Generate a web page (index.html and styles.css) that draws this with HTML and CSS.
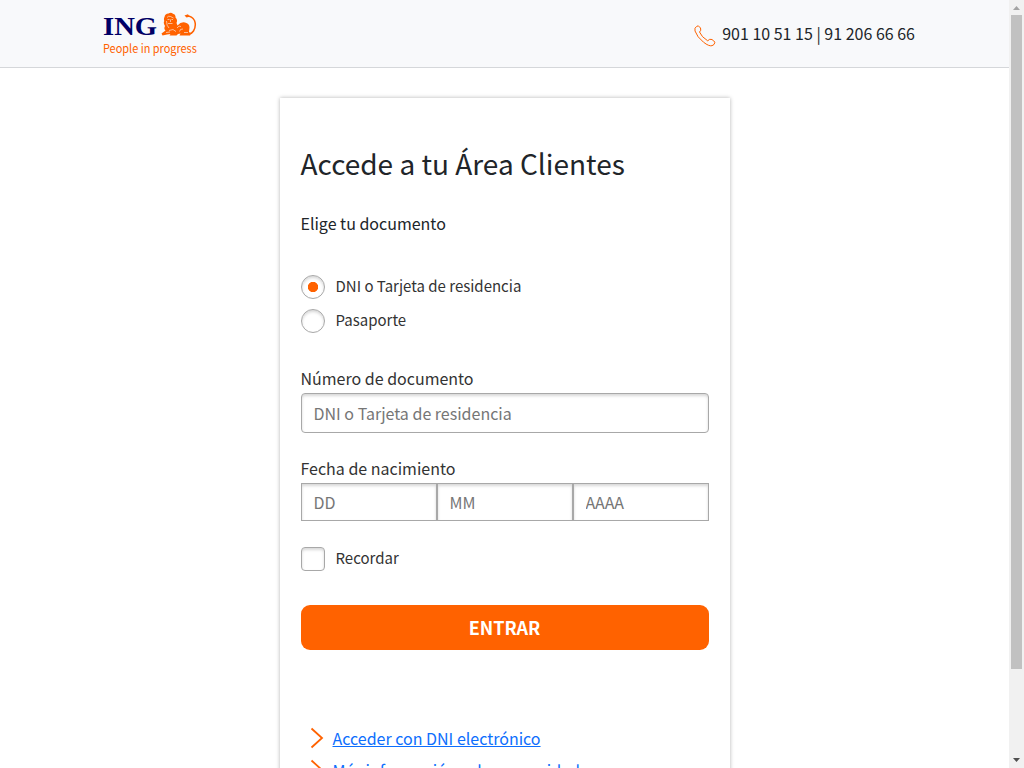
FILE: index.html
```html
<!DOCTYPE html>
<html lang="es">
<head>
<meta charset="utf-8">
<title>ING - Área Clientes</title>
<link rel="stylesheet" href="styles.css">
</head>
<body>
<div class="page">
  <header class="header">
    <div class="logo">
      <div class="logo-top">
        <span class="logo-name">ING</span>
        <svg class="lion" viewBox="0 0 36 24" width="36" height="24">
          <path fill="#ff6200" d="M3.500 5Q4 1.500 7.500 1.500 10-.2 12 1.800 15 2.500 14.500 5.500 17 8 15.500 11L16.500 13.500Q20 9.500 24 10.500 28.500 11.500 28.500 15.500L28 20 30 21.500 29 23.500H18.500L19.500 21.500 17 22 15.500 23.500H8.500L9.500 22 6 22.500 1.500 23.500 .5 21.500 4.500 18.500Q2.500 17 4 14 2 11 3.300 9 2.500 7 3.500 5Z"/>
          <path fill="none" stroke="#ff6200" stroke-width="1.500" d="M26 4Q31 4 33.500 8.500 35.500 14 32.500 19 31 21.500 28 22"/>
          <path fill="#ff6200" d="M23.500 3.500L27 2.300 28.500 4.800 25.500 5.500Z"/>
          <path fill="none" stroke="#f8f9fb" stroke-width=".6" d="M6 5.500Q7.500 3.500 9.500 4.500T12.500 6M6.500 7.500H8.500M10.500 7.500H12M9.500 7.500V10M7 11.500H11.500M5.500 9Q5.500 14 8 16M8 18.500L12 17.500 15 19.500M5 20.500L9 20M16 16Q18 13 20 14.500M18.500 19.500Q19 16.500 22 17M23 20.500H27"/>
        </svg>
      </div>
      <div class="logo-tag">People in progress</div>
    </div>
    <div class="phone">
      <svg class="phone-icon" viewBox="0 0 22 22" width="22" height="22"><path fill="none" stroke="#ff6200" stroke-width="1" stroke-linejoin="round" d="M1 3.200Q2.500 1 4.300 .8L6.500 3Q7.500 5.500 5.500 7 7.500 12 13.700 15.800 15.500 13.500 18 14.500L21 17.200Q20.500 20 18 20.700 15 21.500 9.500 17.200 3 12 1 6Z"/></svg>
      <span>901 10 51 15 | 91 206 66 66</span>
    </div>
  </header>
  <main class="card">
    <h1 class="title">Accede a tu Área Clientes</h1>
    <p class="subtitle">Elige tu documento</p>
    <div class="choices">
      <label class="choice"><input class="radio" type="radio" name="doc" checked><span>DNI o Tarjeta de residencia</span></label>
      <label class="choice"><input class="radio" type="radio" name="doc"><span>Pasaporte</span></label>
    </div>
    <label class="label" for="num">Número de documento</label>
    <input class="field" id="num" placeholder="DNI o Tarjeta de residencia">
    <div class="label label-date">Fecha de nacimiento</div>
    <div class="date">
      <input class="date-field" placeholder="DD"><input class="date-field" placeholder="MM"><input class="date-field" placeholder="AAAA">
    </div>
    <label class="choice remember"><input class="check" type="checkbox"><span>Recordar</span></label>
    <button class="submit">ENTRAR</button>
    <nav class="links">
      <a class="link" href="#"><svg class="chevron" viewBox="0 0 14 22" width="14" height="22"><path d="M1.500 1.500L12 11 1.500 20.500"/></svg><span>Acceder con DNI electrónico</span></a>
      <a class="link" href="#"><svg class="chevron" viewBox="0 0 14 22" width="14" height="22"><path d="M1.500 1.500L12 11 1.500 20.500"/></svg><span>Más información sobre seguridad</span></a>
    </nav>
  </main>
</div>
<div class="scrollbar">
  <svg class="arrow" viewBox="0 0 15 15" width="15" height="15"><path fill="#a3a3a3" d="M4 10h7L7.500 6z"/></svg>
  <div class="thumb"></div>
  <svg class="arrow arrow-down" viewBox="0 0 15 15" width="15" height="15"><path fill="#505050" d="M4 5h7L7.500 9z"/></svg>
</div>
</body>
</html>
```
FILE: styles.css
```css
* { box-sizing: border-box; }
body {
  margin: 0; height: 768px; overflow: hidden; display: flex; background: #fff;
  font-family: "Noto Sans CJK JP", "Noto Sans CJK SC", sans-serif;
  font-size: 16px; line-height: 24px; color: #212529;
}
.page { flex: 1; height: 768px; overflow: hidden; }
.header {
  height: 68px; padding: 0 94px 0 103px; display: flex; justify-content: space-between;
  background: #f8f9fb; border-bottom: 1px solid #d5d7da;
}
.logo { padding-top: 12px; width: 94px; }
.logo-top { display: flex; height: 25px; gap: 4px; }
.logo-name {
  width: 54px; font: bold 26px/30px "Liberation Serif", serif; color: #000066;
  transform: scaleX(1.1); transform-origin: 0 0;
}
.lion { display: block; }
.logo-tag {
  color: #ff6200; font-size: 12px; line-height: 16px; margin-top: 3px; white-space: nowrap;
  transform: scaleX(.91); transform-origin: 0 0;
}
.phone { display: flex; gap: 6px; padding-top: 21px; }
.phone-icon { margin: 4px 0 0; }
.card {
  width: 450px; height: 900px; margin: 30px auto 0 279.5px; padding: 45px 21px 0;
  background: #fff; box-shadow: 0 0 4px rgba(0,0,0,.3);
}
.title { margin: 0; font-size: 28px; line-height: 40px; font-weight: 400; }
.subtitle { margin: 28px 0 0; }
.choices { display: flex; flex-direction: column; gap: 10px; margin-top: 40px; }
.choice { display: flex; height: 24px; gap: 11px; font-size: 15px; line-height: 22px; color: #333; }
.radio, .check {
  appearance: none; width: 24px; height: 24px; margin: 0; border: 1px solid #a8a8a8;
  background: #fff; box-shadow: inset 0 2px 3px #d8d8d8;
}
.radio { border-radius: 50%; }
.radio:checked { background: radial-gradient(circle, #ff6200 4.8px, #fff 5.500px); }
.check { border-radius: 4px; }
.label { display: block; margin-top: 33px; color: #333; }
.field, .date-field {
  width: 100%; border: 1px solid #a8a8a8; padding: 0 12px; font: inherit; color: #333;
  background: #fff; box-shadow: inset 0 2px 3px #d8d8d8; display: block;
}
.field { height: 40px; margin-top: 3px; border-radius: 4px; }
.field::placeholder, .date-field::placeholder { color: #767676; opacity: 1; }
.label-date { margin-top: 23px; }
.date { display: flex; margin-top: 3px; }
.date-field { height: 38px; flex: 1; min-width: 0; }
.remember { margin-top: 26px; }
.submit {
  display: block; width: 100%; height: 45px; margin-top: 34px; padding: 0 0 2px; border: 0; border-radius: 9px;
  background: #ff6200; color: #fff; font: bold 18px/44px "Noto Sans CJK JP", sans-serif;
}
.links { margin-top: 76px; padding-left: 9.500px; display: flex; flex-direction: column; gap: 8px; }
.link { display: flex; gap: 8.500px; height: 24px; color: #0d6efd; }
.chevron { margin-top: 1px; fill: none; stroke: #ff6200; stroke-width: 1.800; }
.scrollbar { width: 15px; height: 768px; background: #f1f1f1; display: flex; flex-direction: column; }
.arrow { display: block; }
.thumb { width: 11px; height: 654px; margin-left: 2px; background: #c1c1c1; }
.arrow-down { margin-top: auto; }
```
